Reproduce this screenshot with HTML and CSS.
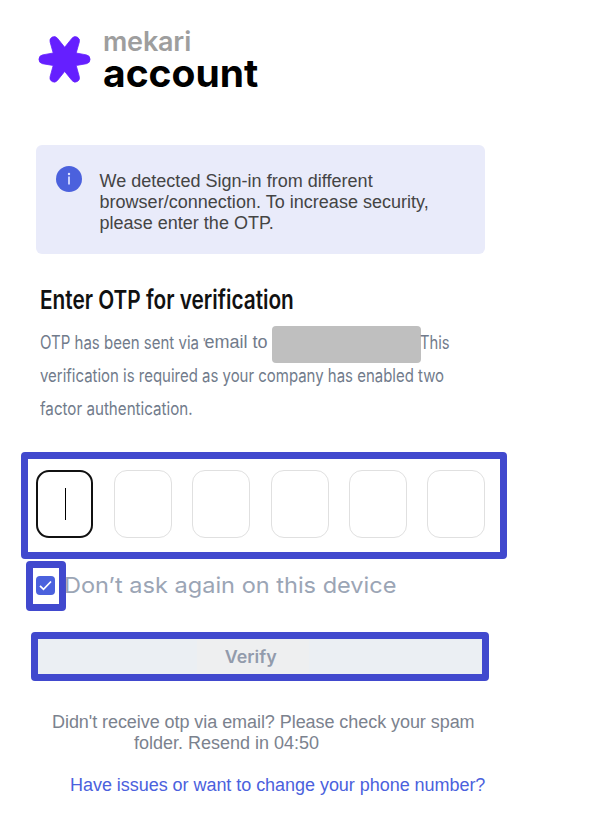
FILE: index.html
```html
<!DOCTYPE html>
<html lang="en">
<head>
    <meta charset="UTF-8">
    <meta name="viewport" content="width=device-width, initial-scale=1.0">
    <title>Mekari Account</title>
    <link rel="stylesheet" href="styles.css">
</head>
<body>
    <header class="logo">
        <svg class="logo-star" width="54" height="50" viewBox="0 0 54 50">
            <path fill="#651fff" stroke="#651fff" stroke-width="0.800" stroke-linejoin="round" d="M26.700 12.300L34 3.200A4.200 4.200 0 0 1 41.300 7L38.200 18L48.500 19.900A4.500 4.500 0 0 1 48.500 28.700L38.200 30.500L41.300 41.700A4.200 4.200 0 0 1 34 45.500L26.700 36.400L19.400 45.500A4.200 4.200 0 0 1 12.100 41.700L15.200 30.500L4.500 28.700A4.500 4.500 0 0 1 4.500 19.900L15.200 18L12.100 7A4.200 4.200 0 0 1 19.400 3.200Z"/>
        </svg>
        <div class="logo-name">
            <div class="brand">mekari</div>
            <div class="product">account</div>
        </div>
    </header>

    <main>
        <div class="alert">
            <svg class="alert-icon" width="26" height="26" viewBox="0 0 26 26">
                <circle cx="13" cy="13" r="13" fill="#4b61dd"/>
                <circle cx="13" cy="8" r="1.200" fill="#e0e5ff"/>
                <path d="M13 10.500V18.500" stroke="#c8d0ff" stroke-width="2"/>
            </svg>
            <p>We detected Sign-in from different<br>browser/connection. To increase security,<br>please enter the OTP.</p>
        </div>

        <h1><span>Enter OTP for verification</span></h1>
        <div class="description">
            <div class="line"><span class="sent">OTP has been sent via</span><span class="mark">'</span><span class="email">email to</span><span class="masked"></span><span class="this">This</span></div>
            <div class="line"><span class="second">verification is required as your company has enabled two</span></div>
            <div class="line"><span class="third">factor authentication.</span></div>
        </div>

        <div class="otp">
            <div class="digit active"><i class="caret"></i></div>
            <div class="digit"></div>
            <div class="digit"></div>
            <div class="digit"></div>
            <div class="digit"></div>
            <div class="digit"></div>
        </div>

        <label class="remember">
            <span class="check-frame">
                <svg width="19" height="19" viewBox="0 0 19 19">
                    <rect width="19" height="19" rx="4" fill="#4b61dd"/>
                    <path d="M4 9.800L7.500 13.300L15 5.500" fill="none" stroke="#fff" stroke-width="1.800"/>
                </svg>
            </span>
            <span class="remember-text">Don’t ask again on this device</span>
        </label>

        <button class="verify"><span class="verify-label"><span>Verify</span></span></button>

        <p class="resend"><span class="spam">Didn't receive otp via email? Please check your spam</span><br><span class="timer">folder. Resend in 04:50</span></p>
        <a class="help">Have issues or want to change your phone number?</a>
    </main>
</body>
</html>
```

FILE: styles.css
```css
* {
    box-sizing: border-box;
}

body {
    margin: 0;
    width: 597px;
    height: 830px;
    overflow: hidden;
    background-color: #fff;
    font-family: "Liberation Sans", Arial, sans-serif;
}

h1, p {
    margin: 0;
}

h1 span,
.description span,
.remember-text {
    display: inline-block;
    white-space: nowrap;
    transform-origin: left center;
}

.logo {
    display: flex;
    height: 145px;
    padding: 28px 0 0 38px;
}

.logo-star {
    margin-top: 7px;
}

.logo-name {
    margin: 0 0 0 11px;
}

.brand,
.product {
    width: max-content;
    font-family: Inter, sans-serif;
}

.brand {
    height: 28px;
    font-size: 27px;
    font-weight: 600;
    line-height: 28px;
    letter-spacing: -0.2px;
    color: #9e9e9e;
}

.product {
    height: 34px;
    font-size: 39px;
    font-weight: 700;
    line-height: 34px;
    color: #000;
}

.alert {
    display: flex;
    width: 449px;
    height: 109px;
    margin-left: 36px;
    padding: 21px 20px;
    background-color: #e9ebfa;
    border-radius: 6px;
}

.alert p {
    margin: 5px 0 0 17.5px;
    font-size: 18px;
    line-height: 21px;
    letter-spacing: 0.02px;
    color: #444;
    white-space: nowrap;
}

h1 {
    height: 32px;
    margin: 30px 0 0 39.5px;
    font-family: Inter, sans-serif;
    font-size: 26px;
    font-weight: 600;
    line-height: 32px;
    color: #111;
}

h1 span {
    transform: scaleX(0.8);
}

.description {
    margin: 10px 0 0 39.5px;
    font-family: Inter, sans-serif;
    font-size: 18px;
    color: #717b8b;
}

.line {
    display: flex;
    align-items: center;
    height: 33px;
}

.sent {
    width: 163px;
    transform: scaleX(0.834);
}

.mark {
    width: 2px;
    font-size: 12px;
}

.email {
    width: 67px;
    font-family: "Liberation Sans", Arial, sans-serif;
}

.masked {
    flex: none;
    width: 149px;
    height: 37px;
    margin-top: 3px;
    border-radius: 4px;
    background-color: #bfbfbf;
}

.this {
    margin-left: -1px;
    transform: scaleX(0.82);
}

.second {
    transform: scaleX(0.831);
}

.third {
    transform: scaleX(0.842);
}

.otp {
    display: flex;
    justify-content: space-between;
    width: 486px;
    height: 107px;
    margin: 27px 0 0 21px;
    padding: 11px 15px 0 8px;
    border: 7px solid #4149ce;
    border-radius: 4px;
}

.digit {
    width: 58px;
    height: 68px;
    border: 1px solid #e0e0e0;
    border-radius: 13px;
}

.digit.active {
    display: flex;
    justify-content: center;
    align-items: center;
    width: 57px;
    margin-right: 1px;
    border: 2px solid #111;
}

.caret {
    width: 1px;
    height: 32px;
    margin-left: 2px;
    background-color: #000;
}

.remember {
    display: flex;
    margin: 2px 0 0 26px;
}

.check-frame {
    display: flex;
    flex: none;
    width: 40px;
    height: 50px;
    padding: 8px 0 0 3px;
    border: 7px solid #4149ce;
    border-radius: 4px;
}

.remember-text {
    height: 48px;
    margin-left: -2px;
    font-family: Inter, sans-serif;
    font-size: 22px;
    line-height: 48px;
    color: #9ba5b5;
    transform: scaleX(1.07);
}

.verify {
    display: flex;
    justify-content: center;
    width: 458px;
    height: 49px;
    margin: 21px 0 0 31px;
    padding: 0;
    border: 7px solid #4149ce;
    border-radius: 4px;
    background-color: #ebeff3;
}

.verify-label {
    width: 112px;
    height: 35px;
    margin-right: 15px;
    background-color: #eeeff0;
    font-family: Inter, sans-serif;
    font-size: 17px;
    font-weight: 600;
    line-height: 36px;
    color: #929bac;
}

.verify-label span {
    display: inline-block;
    margin-right: 3px;
    transform: scaleX(1.05);
}

.resend {
    margin: 31px 0 0 52px;
    font-size: 18px;
    line-height: 21px;
    color: #7b828e;
    white-space: nowrap;
}

.spam {
    letter-spacing: -0.06px;
}

.timer {
    margin-left: 82px;
}

.help {
    display: block;
    margin: 21px 0 0 70px;
    font-size: 18px;
    line-height: 21px;
    letter-spacing: -0.04px;
    color: #4b61dd;
    white-space: nowrap;
}
```
